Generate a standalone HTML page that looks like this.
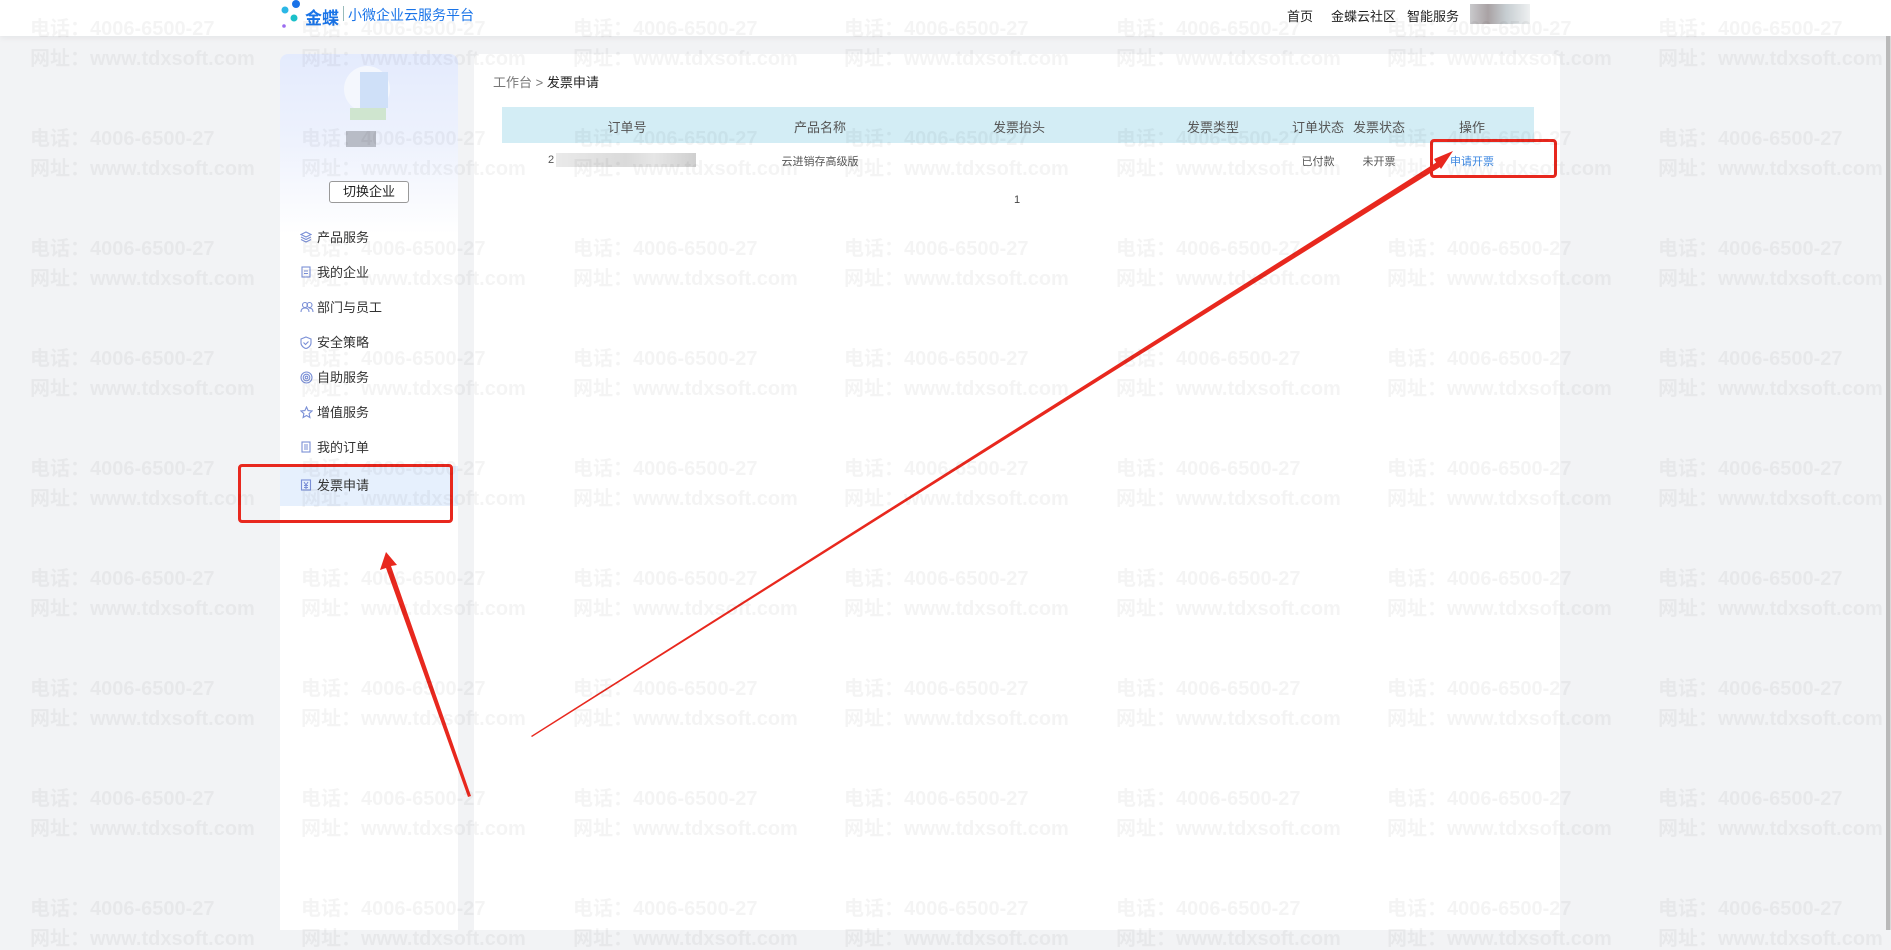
<!DOCTYPE html>
<html><head><meta charset="utf-8">
<style>
*{margin:0;padding:0;box-sizing:border-box}
body{width:1891px;height:930px;overflow:hidden;background:#f2f3f5;font-family:"Liberation Sans","Noto Sans CJK SC",sans-serif;position:relative;color:#333}
.top{position:absolute;left:0;top:0;width:1891px;height:36px;background:#fff;box-shadow:0 2px 6px rgba(0,0,0,.06)}
.abs{position:absolute}
.side{position:absolute;left:280px;top:54px;width:178px;height:876px;background:linear-gradient(#e4ebfd 0px,#eef2fd 90px,#fff 180px);border-radius:8px 8px 0 0}
.main{position:absolute;left:474px;top:54px;width:1086px;height:876px;background:#fff;border-radius:6px 6px 0 0}
.mi{position:absolute;left:300px;font-size:13px;color:#333;height:20px;line-height:20px}
.mi svg{position:absolute;left:0;top:3px}
.mi span{position:absolute;left:17px;white-space:nowrap}
.th{position:absolute;top:117px;font-size:13px;color:#555;transform:translateX(-50%);white-space:nowrap}
.td{position:absolute;top:153px;font-size:11px;color:#555;transform:translateX(-50%);white-space:nowrap}
.wm{position:absolute;font-weight:bold;font-size:20px;color:rgba(0,0,0,.042);white-space:nowrap;line-height:22px;pointer-events:none}
.red{position:absolute;border:3px solid #e8281e;border-radius:4px}
</style></head><body>
<div class="top"></div>
<svg class="abs" style="left:280px;top:0" width="22" height="30"><circle cx="16" cy="4" r="4" fill="#1a73e8"/><circle cx="5" cy="10" r="3.5" fill="#2bb7e6"/><circle cx="14" cy="18" r="3.5" fill="#1bc0c9"/><circle cx="4" cy="26" r="1.8" fill="#9b6cf0"/></svg>
<div class="abs" style="left:305px;top:4px;font-size:17px;font-weight:bold;color:#1a74e8">金蝶</div>
<div class="abs" style="left:343px;top:6px;width:1px;height:15px;background:#9bb"></div>
<div class="abs" style="left:348px;top:5px;font-size:14px;color:#1a74e8">小微企业云服务平台</div>
<div class="abs" style="left:1287px;top:6px;font-size:13px;color:#222">首页</div>
<div class="abs" style="left:1331px;top:6px;font-size:13px;color:#222">金蝶云社区</div>
<div class="abs" style="left:1407px;top:6px;font-size:13px;color:#222">智能服务</div>
<div class="abs" style="left:1470px;top:4px;width:60px;height:20px;background:linear-gradient(90deg,#c9c9cc,#a9a2a4 30%,#c6cdd1 60%,#eef0f1)"></div>
<div class="abs" style="left:1886px;top:36px;width:5px;height:894px;background:#d9d9d9"></div>
<div class="abs" style="left:1886px;top:36px;width:4px;height:894px;background:#9a9a9a;opacity:.5"></div>

<div class="side"></div>
<div class="abs" style="left:344px;top:66px;width:46px;height:46px;border-radius:50%;background:#f4f7fd"></div>
<div class="abs" style="left:360px;top:72px;width:28px;height:36px;background:#cfe0f8"></div>
<div class="abs" style="left:350px;top:108px;width:36px;height:12px;background:#cfe5cf"></div>
<div class="abs" style="left:346px;top:131px;width:30px;height:16px;background:#b8bcc6"></div>
<div class="abs" style="left:329px;top:181px;width:80px;height:22px;border:1px solid #999;border-radius:3px;background:#fff;font-size:13px;text-align:center;line-height:20px;color:#222">切换企业</div>

<div class="abs" style="left:280px;top:466px;width:178px;height:40px;background:#e6f0fd"></div>
<div class="mi" style="top:228px"><svg width="12" height="12" fill="none" stroke="#7a8fd6" stroke-width="1.1"><path d="M6 1L11 3.5 6 6 1 3.5Z M1 6L6 8.5 11 6 M1 8.5L6 11 11 8.5"/></svg><span>产品服务</span></div>
<div class="mi" style="top:263px"><svg width="12" height="12" fill="none" stroke="#7a8fd6" stroke-width="1.1"><rect x="2" y="1" width="8" height="10"/><path d="M4 5h4M4 7.5h4"/></svg><span>我的企业</span></div>
<div class="mi" style="top:298px"><svg width="14" height="12" fill="none" stroke="#7a8fd6" stroke-width="1.1"><circle cx="5" cy="4" r="2.5"/><circle cx="9.5" cy="4" r="2.5"/><path d="M1 11c0-3 2-4 4-4s4 1 4 4M9 7c2 0 4 1 4 4"/></svg><span>部门与员工</span></div>
<div class="mi" style="top:333px"><svg width="12" height="13" fill="none" stroke="#7a8fd6" stroke-width="1.1"><path d="M6 1L11 3v4c0 3-3 5-5 5.5C4 12 1 10 1 7V3Z M3.5 6.5l2 2 3-3"/></svg><span>安全策略</span></div>
<div class="mi" style="top:368px"><svg width="13" height="13" fill="none" stroke="#7a8fd6" stroke-width="1.1"><circle cx="6.5" cy="6.5" r="5.5"/><circle cx="6.5" cy="6.5" r="3.3"/><circle cx="6.5" cy="6.5" r="1.3"/></svg><span>自助服务</span></div>
<div class="mi" style="top:403px"><svg width="13" height="13" fill="none" stroke="#7a8fd6" stroke-width="1.1"><path d="M6.5 1l1.6 3.6 3.9.4-2.9 2.6.8 3.9-3.4-2-3.4 2 .8-3.9L1 5l3.9-.4Z"/></svg><span>增值服务</span></div>
<div class="mi" style="top:438px"><svg width="12" height="12" fill="none" stroke="#7a8fd6" stroke-width="1.1"><rect x="2" y="1" width="8" height="10"/><path d="M4 4h4M4 6h4M4 8h4"/></svg><span>我的订单</span></div>
<div class="mi" style="top:476px"><svg width="12" height="12" fill="none" stroke="#7a8fd6" stroke-width="1.1"><rect x="1.5" y="1" width="9" height="10"/><path d="M4 3l2 3 2-3M6 6v4M4 6.5h4M4 8.5h4"/></svg><span>发票申请</span></div>

<div class="main"></div>
<div class="abs" style="left:493px;top:72px;font-size:13px;color:#777">工作台 &gt; <span style="color:#222">发票申请</span></div>
<div class="abs" style="left:502px;top:107px;width:1032px;height:36px;background:#d3edf5"></div>
<div class="th" style="left:627px">订单号</div>
<div class="th" style="left:820px">产品名称</div>
<div class="th" style="left:1019px">发票抬头</div>
<div class="th" style="left:1213px">发票类型</div>
<div class="th" style="left:1318px">订单状态</div>
<div class="th" style="left:1379px">发票状态</div>
<div class="th" style="left:1472px">操作</div>
<div class="abs" style="left:548px;top:154px;font-size:11px;color:#555">2</div>
<div class="abs" style="left:556px;top:153px;width:140px;height:14px;background:linear-gradient(90deg,#eaeaea,#dadada 50%,#e6e6e6 70%,#cfcfcf)"></div>
<div class="td" style="left:820px">云进销存高级版</div>
<div class="td" style="left:1318px">已付款</div>
<div class="td" style="left:1379px">未开票</div>
<div class="td" style="left:1472px;color:#3a86e0">申请开票</div>
<div class="abs" style="left:1014px;top:194px;font-size:11px;color:#444">1</div>

<div class="red" style="left:238px;top:464px;width:215px;height:59px"></div>
<div class="red" style="left:1430px;top:139px;width:127px;height:39px"></div>
<svg class="abs" style="left:0;top:0" width="1891" height="930">
<polygon points="471,796 468,797 386,568 380,570 386,552 397,565 391,566" fill="#e8281e"/>
<polygon points="531,736 1437,164 1434,159 1453,151 1441,169 1439,166 532,737" fill="#e8281e"/>
<polygon points="531,736 1437,162 1440,167" fill="#e8281e"/>
</svg>

<div id="wm"></div>
<script>
var h='';var xs=[30,301,573,844,1116,1387,1658];
for(var r=0;r<9;r++){var y=18+r*110;for(var i=0;i<xs.length;i++){h+='<div class="wm" style="left:'+xs[i]+'px;top:'+y+'px">电话：4006-6500-27</div><div class="wm" style="left:'+xs[i]+'px;top:'+(y+30)+'px">网址：www.tdxsoft.com</div>';}}
document.getElementById('wm').innerHTML=h;
</script>
</body></html>
